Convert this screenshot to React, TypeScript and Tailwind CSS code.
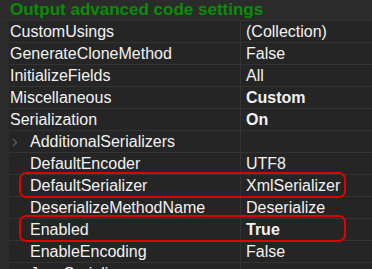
import React from "react";

type Row = {
  name: string;
  value?: string;
  bold?: boolean;
  indent?: boolean;
  expander?: boolean;
};

const ROWS: Row[] = [
  { name: "CustomUsings", value: "(Collection)" },
  { name: "GenerateCloneMethod", value: "False" },
  { name: "InitializeFields", value: "All" },
  { name: "Miscellaneous", value: "Custom", bold: true },
  { name: "Serialization", value: "On", bold: true },
  { name: "AdditionalSerializers", indent: true, expander: true },
  { name: "DefaultEncoder", value: "UTF8", indent: true },
  { name: "DefaultSerializer", value: "XmlSerializer", indent: true },
  { name: "DeserializeMethodName", value: "Deserialize", indent: true },
  { name: "Enabled", value: "True", bold: true, indent: true },
  { name: "EnableEncoding", value: "False", indent: true },
  { name: "JsonSerializer", value: "", indent: true },
];

function Chevron() {
  return (
    <svg width="6" height="9" viewBox="0 0 6 9" className="absolute left-[3px] top-[7px]">
      <path d="M1 1 L4.5 4.5 L1 8" fill="none" stroke="#5a5a5a" strokeWidth="1.4" />
    </svg>
  );
}

export default function App() {
  return (
    <div
      className="relative h-[269px] w-[372px] overflow-hidden bg-[#252525] text-[16px] text-[#f2f2f2]"
      style={{ fontFamily: '"Liberation Sans", Arial, sans-serif' }}
    >
      <div className="h-[21px] border-b border-[#303030] bg-[#2b2b2b] pl-[10px] text-[17px] font-bold leading-[20px] text-[#0a8c0a]">
        Output advanced code settings
      </div>
      {ROWS.map((r) => (
        <div key={r.name} className="flex h-[22px]">
          <div className="w-[9px] shrink-0 bg-[#2b2b2b]" />
          <div
            className={`relative w-[232px] shrink-0 border-r border-b border-[#333333] leading-[21px] whitespace-nowrap overflow-hidden ${
              r.indent ? "pl-[21px]" : "pl-[1px]"
            }`}
          >
            {r.expander && <Chevron />}
            {r.name}
          </div>
          <div
            className={`flex-1 border-b border-[#333333] pl-[5px] leading-[21px] whitespace-nowrap ${
              r.bold ? "font-bold" : ""
            }`}
          >
            {r.value}
          </div>
        </div>
      ))}
      <div className="absolute left-[19px] top-[172px] h-[26px] w-[327px] rounded-[7px] border-2 border-[#e00000]" />
      <div className="absolute left-[19px] top-[215px] h-[27px] w-[327px] rounded-[7px] border-2 border-[#e00000]" />
    </div>
  );
}
